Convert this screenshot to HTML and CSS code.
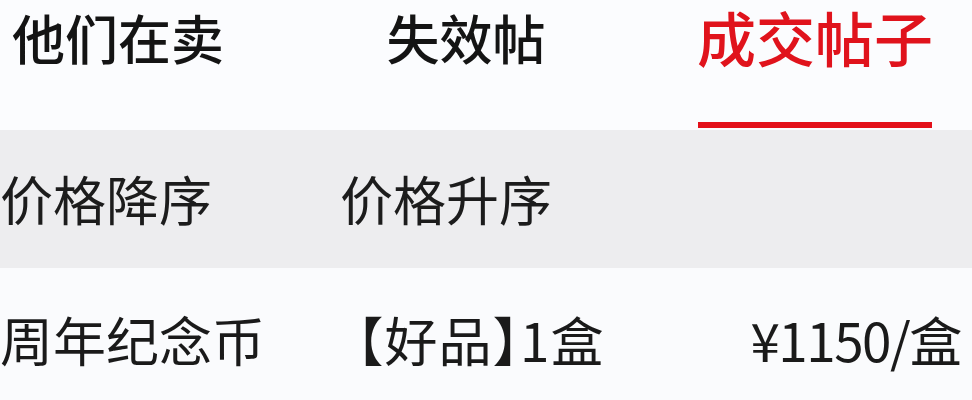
FILE: index.html
```html
<!DOCTYPE html>
<html lang="zh-CN">
<head>
<meta charset="utf-8">
<link rel="stylesheet" href="styles.css">
</head>
<body>
<div class="page">
  <nav class="tabs">
    <div class="tab">他们在卖</div>
    <div class="tab">失效帖</div>
    <div class="tab active">成交帖子</div>
  </nav>
  <div class="filters">
    <div class="filter">价格降序</div>
    <div class="filter">价格升序</div>
  </div>
  <div class="row">
    <div class="cell name">周年纪念币</div>
    <div class="cell spec">【好品】1盒</div>
    <div class="cell price">¥1150/盒</div>
  </div>
</div>
</body>
</html>
```
FILE: styles.css
```css
html, body {
  margin: 0;
  padding: 0;
  background: #fafbfd;
}
.page {
  width: 972px;
  height: 400px;
  overflow: hidden;
  font-family: "Noto Sans CJK SC", "Noto Sans", sans-serif;
  color: #141414;
}
.tabs {
  height: 130px;
  display: grid;
  grid-template-columns: 236px 460px 260px;
  justify-items: center;
  background: #fbfcfe;
}
.tab {
  display: flex;
  flex-direction: column;
  align-items: center;
  justify-content: space-between;
  font-size: 53px;
  font-weight: 500;
  line-height: 1.2;
  padding-top: 6px;
  padding-bottom: 2px;
  white-space: nowrap;
}
.tab.active {
  color: #e0131c;
  font-size: 59px;
  padding-top: 2px;
  margin-right: 22px;
}
.tab.active::after {
  content: "";
  display: block;
  width: 234px;
  height: 6px;
  background: #e3101a;
}
.filters {
  height: 138px;
  background: #ededef;
  display: flex;
  align-items: center;
  gap: 128px;
}
.filter {
  font-size: 53px;
  line-height: 1.2;
  color: #1c1c1c;
  white-space: nowrap;
}
.row {
  height: 120px;
  padding-top: 12px;
  display: flex;
  align-items: center;
  background: #fafbfd;
}
.cell {
  font-size: 53px;
  line-height: 1.2;
  color: #1a1a1a;
  white-space: nowrap;
  flex-shrink: 0;
}
.spec {
  margin-left: 92px;
  letter-spacing: 1px;
  font-feature-settings: "halt";
}
.price {
  margin-left: 146px;
  letter-spacing: -1.5px;
}
```
